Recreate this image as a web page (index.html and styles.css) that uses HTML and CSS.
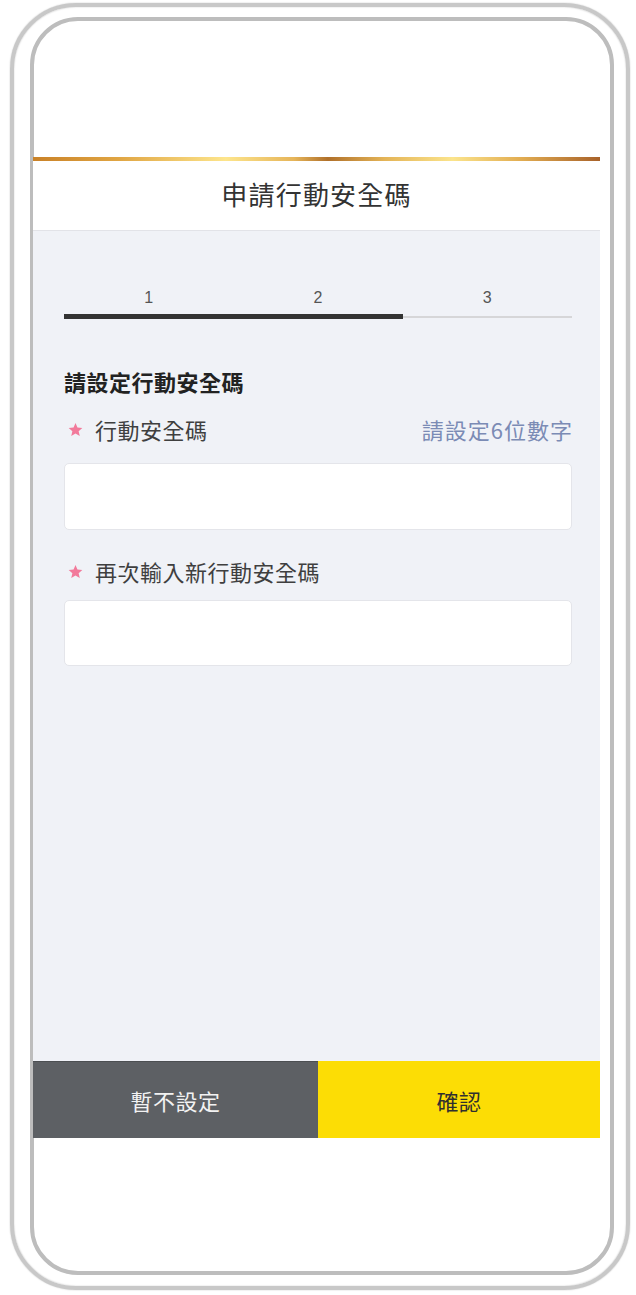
FILE: index.html
```html
<!DOCTYPE html>
<html lang="zh-Hant">
<head>
<meta charset="utf-8">
<title>申請行動安全碼</title>
<link rel="stylesheet" href="styles.css">
</head>
<body>
<div class="phone">
  <div class="bezel">
    <div class="screen">
      <div class="gold"></div>
      <header class="header"><h1 class="title">申請行動安全碼</h1></header>
      <main class="content">
        <div class="steps">
          <span class="step">1</span>
          <span class="step">2</span>
          <span class="step">3</span>
        </div>
        <div class="track">
          <div class="track-done"></div>
          <div class="track-rest"></div>
        </div>
        <h2 class="heading">請設定行動安全碼</h2>
        <div class="field-label first">
          <span class="label-text">
            <svg class="star" viewBox="0 0 24 24" width="15" height="15"><path d="M12 1.5l3.1 7.2 7.8.7-5.9 5.2 1.8 7.7L12 18.3l-6.8 4 1.8-7.7L1.1 9.4l7.8-.7z" fill="#f27a9b"/></svg>
            行動安全碼
          </span>
          <span class="hint">請設定6位數字</span>
        </div>
        <input class="input first-input" type="password" inputmode="numeric" maxlength="6">
        <div class="field-label second">
          <span class="label-text">
            <svg class="star" viewBox="0 0 24 24" width="15" height="15"><path d="M12 1.5l3.1 7.2 7.8.7-5.9 5.2 1.8 7.7L12 18.3l-6.8 4 1.8-7.7L1.1 9.4l7.8-.7z" fill="#f27a9b"/></svg>
            再次輸入新行動安全碼
          </span>
        </div>
        <input class="input second-input" type="password" inputmode="numeric" maxlength="6">
      </main>
      <div class="actions">
        <button class="btn btn-skip" type="button">暫不設定</button>
        <button class="btn btn-confirm" type="button">確認</button>
      </div>
    </div>
  </div>
</div>
</body>
</html>
```
FILE: styles.css
```css
html, body {
  margin: 0;
  padding: 0;
  background: #ffffff;
}
body {
  width: 636px;
  height: 1295px;
  overflow: hidden;
  font-family: "Noto Sans CJK TC", "Noto Sans", sans-serif;
}
.phone {
  margin: 3px 0 0 10px;
  width: 620px;
  height: 1287px;
  box-sizing: border-box;
  border: 4px solid #c8c8c8;
  border-radius: 66px;
  box-shadow: 0 0 1.5px #bdbdbd, inset 0 0 1.5px #bdbdbd;
  padding: 10px 12px 11px 16px;
}
.bezel {
  height: 100%;
  box-sizing: border-box;
  border: 4px solid #bdbdbd;
  border-radius: 48px;
  padding-top: 136px;
  background: #ffffff;
}
.screen {
  margin-left: -1px;
  width: 567px;
}
.gold {
  height: 4px;
  background: linear-gradient(90deg, #c98127 0%, #e0a543 15%, #fde58c 34%, #e6b55a 46%, #b0702a 52%, #e4b457 62%, #fbe48c 74%, #e2ad52 86%, #a8622a 100%);
}
.header {
  height: 69px;
  border-bottom: 1px solid #e2e3e8;
  background: #ffffff;
  display: flex;
  align-items: center;
  justify-content: center;
}
.title {
  margin: 0 0 4px 0;
  font-size: 26px;
  font-weight: 400;
  color: #333333;
  line-height: 1;
  letter-spacing: 1.2px;
}
.content {
  display: block;
  height: 830px;
  box-sizing: border-box;
  background: #f0f2f7;
  padding: 57px 28px 0 31px;
}
.steps {
  display: grid;
  grid-template-columns: 1fr 1fr 1fr;
  text-align: center;
}
.step {
  font-family: "Liberation Sans", "Noto Sans", sans-serif;
  font-size: 16px;
  line-height: 20px;
  color: #555555;
}
.track {
  margin-top: 6px;
  height: 5px;
  display: flex;
  align-items: center;
}
.track-done {
  width: 66.67%;
  height: 5px;
  background: #333333;
}
.track-rest {
  flex: 1;
  height: 2px;
  background: #d6d6d8;
}
.heading {
  margin: 47px 0 0 0;
  font-size: 22px;
  line-height: 30px;
  font-weight: 700;
  color: #222222;
  letter-spacing: 0.5px;
}
.field-label {
  display: flex;
  justify-content: space-between;
  align-items: center;
  line-height: 30px;
  font-size: 22px;
  letter-spacing: 0.5px;
}
.field-label.first {
  margin-top: 18px;
}
.field-label.second {
  margin-top: 26px;
}
.label-text {
  display: flex;
  align-items: center;
  color: #3f3f3f;
}
.star {
  margin: 0 12px 0 4px;
  flex: none;
}
.hint {
  color: #7b8bb5;
  letter-spacing: 1px;
  margin-right: -1px;
}
.input {
  display: block;
  width: 100%;
  box-sizing: border-box;
  background: #ffffff;
  border: 1px solid #e4e5ea;
  border-radius: 5px;
  outline: none;
  padding: 0 14px;
  font-size: 20px;
  margin: 0;
}
.first-input {
  margin-top: 19px;
  height: 67px;
}
.second-input {
  margin-top: 14px;
  height: 66px;
}
.actions {
  display: grid;
  grid-template-columns: 285px 1fr;
  height: 77px;
}
.btn {
  border: none;
  margin: 0;
  padding: 0;
  font-family: "Noto Sans CJK TC", "Noto Sans", sans-serif;
  font-size: 22px;
  letter-spacing: 0.5px;
  cursor: pointer;
}
.btn-skip {
  background: #5d6064;
  color: #f2f2f2;
  border-top: 1px solid #4c4f52;
}
.btn-confirm {
  background: #fcdd05;
  color: #2f2f2f;
}
```
